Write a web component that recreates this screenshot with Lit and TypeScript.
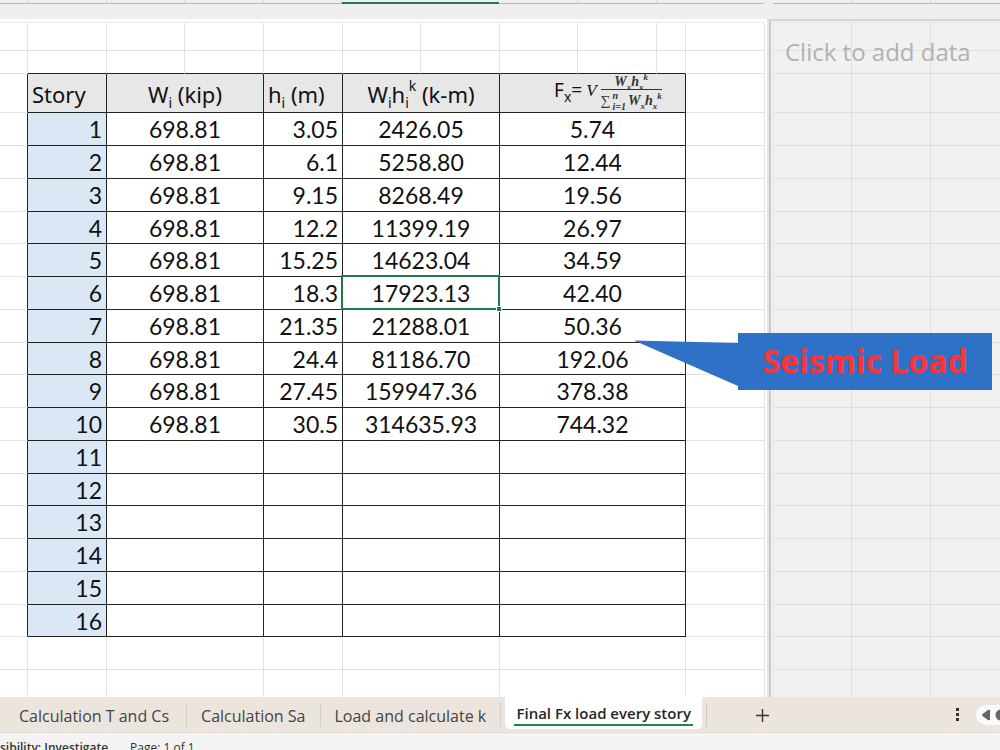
import { LitElement, html, css, nothing } from "lit";
import { customElement, state } from "lit/decorators.js";

type Row = [string, string, string, string];

const LOADS: Row[] = [
  ["698.81", "3.05", "2426.05", "5.74"],
  ["698.81", "6.1", "5258.80", "12.44"],
  ["698.81", "9.15", "8268.49", "19.56"],
  ["698.81", "12.2", "11399.19", "26.97"],
  ["698.81", "15.25", "14623.04", "34.59"],
  ["698.81", "18.3", "17923.13", "42.40"],
  ["698.81", "21.35", "21288.01", "50.36"],
  ["698.81", "24.4", "81186.70", "192.06"],
  ["698.81", "27.45", "159947.36", "378.38"],
  ["698.81", "30.5", "314635.93", "744.32"],
];
const STORIES = 16;
const EMPTY: Row = ["", "", "", ""];
const TABS = ["Calculation T and Cs", "Calculation Sa", "Load and calculate k", "Final Fx load every story"];

@customElement("sheet-table")
export class SheetTable extends LitElement {
  static styles = css`
    :host { display: block; }
    table { border-spacing: 0; table-layout: fixed; width: 765px; font: 23px/28px Lato, sans-serif; color: #111; }
    .c28 { width: 28px; } .c29 { width: 29px; } .c78 { width: 78px; } .c79 { width: 79px; }
    td, th { padding: 0; box-sizing: border-box; border: 0 solid #e2e2e2; border-width: 0 1px 1px 0; text-align: center; font-weight: 400; white-space: nowrap; }
    .margin { height: 28px; }
    .above { height: 23px; }
    .head { height: 39px; }
    .row { height: 33px; }
    .row:nth-child(4n) { height: 32px; }
    .tail { height: 33px; }
    .ink { border-color: #222; }
    .ink-right { border-right-color: #222; }
    .ink-bottom { border-bottom-color: #222; }
    .head .ink { background: #e7e7e7; font: 22px/28px "Noto Sans", sans-serif; padding-top: 2px; }
    .head .left { text-align: left; padding-left: 4px; }
    .head .formula { padding: 0 0 0 54px; text-align: left; }
    .row .story { background: #dae8f6; }
    .row .right { text-align: right; padding-right: 4px; }
    sub, sup { font-size: 14px; line-height: 0; }
    .power { vertical-align: 12px; }
    .selected { position: relative; }
    .cursor { position: absolute; inset: -2px -1px -1px -2px; border: 2px solid #1f7a48; pointer-events: none; }
    .grip { position: absolute; right: -4px; bottom: -4px; width: 4px; height: 4px; background: #1f7a48; border: 1px solid #fff; }
    .fx { display: flex; align-items: center; height: 38px; font: 19px/24px "Noto Sans", sans-serif; }
    .lead { padding-bottom: 6px; }
    .math { font: italic 17px/16px "Liberation Serif", serif; padding: 0 4px 5px 4px; }
    .frac { display: flex; flex-direction: column; align-items: center; }
    .num, .den { font: italic bold 14px/16px "Liberation Serif", serif; color: #333; display: flex; align-items: center; justify-content: center; }
    .num { border-bottom: 1px solid #333; width: 100%; height: 15px; }
    .den { height: 22px; gap: 2px; }
    .frac sub, .frac sup { font-size: 9px; }
    .limits { display: flex; flex-direction: column; font-size: 10px; line-height: 11px; }
    .sigma { font-style: normal; font-weight: 400; font-size: 14px; }
  `;

  private cells(story: number, r: Row) {
    const picked = story === 6;
    return html`<tr class="row">
      <td class="ink-right"></td>
      <th scope="row" class="ink story right">${story}</th>
      <td class="ink" colspan="2">${r[0]}</td>
      <td class="ink right">${r[1]}</td>
      <td class="ink ${picked ? "selected" : ""}" colspan="2">${r[2]}${picked
        ? html`<span class="cursor"><span class="grip"></span></span>`
        : nothing}</td>
      <td class="ink" colspan="3">${r[3]}</td>
      <td></td>
    </tr>`;
  }

  private spare(cls: string) {
    return html`<tr class=${cls}><td></td><td></td><td colspan="2"></td><td></td><td colspan="2"></td><td colspan="3"></td><td></td></tr>`;
  }

  render() {
    const w = html`<sub>x</sub>`;
    return html`<table>
      <colgroup>
        <col class="c28"><col class="c79"><col class="c78"><col class="c79"><col class="c79"><col class="c78">
        <col class="c79"><col class="c78"><col class="c79"><col class="c29"><col class="c79">
      </colgroup>
      <thead>
        <tr class="margin">${Array.from({ length: 11 }, () => html`<td></td>`)}</tr>
        <tr class="above">${Array.from({ length: 11 }, (_, i) => html`<td class=${i > 0 && i < 10 ? "ink-bottom" : ""}></td>`)}</tr>
        <tr class="head">
          <td class="ink-right"></td>
          <th scope="col" class="ink left">Story</th>
          <th scope="col" class="ink" colspan="2">W<sub>i</sub> (kip)</th>
          <th scope="col" class="ink left">h<sub>i</sub> (m)</th>
          <th scope="col" class="ink" colspan="2">W<sub>i</sub>h<sub>i</sub><sup class="power">k</sup> (k-m)</th>
          <th scope="col" class="ink formula" colspan="3">
            <div class="fx">
              <span class="lead">F<sub>x</sub>=</span><span class="math">V</span>
              <span class="frac">
                <span class="num"><span>W${w}h${w}<sup>k</sup></span></span>
                <span class="den"><span class="sigma">∑</span><span class="limits"><span>n</span><span>i=1</span></span><span>W${w}h${w}<sup>k</sup></span></span>
              </span>
            </div>
          </th>
          <td></td>
        </tr>
      </thead>
      <tbody>
        ${Array.from({ length: STORIES }, (_, i) => this.cells(i + 1, LOADS[i] ?? EMPTY))}
      </tbody>
      <tfoot>${this.spare("tail")}${this.spare("tail")}</tfoot>
    </table>`;
  }
}

@customElement("app-root")
export class AppRoot extends LitElement {
  @state() private active = 3;

  static styles = css`
    :host { display: flex; flex-direction: column; height: 100vh; overflow: hidden; position: relative; background: #efefef; font-family: "Open Sans", sans-serif; color: #333; }
    .columns { display: flex; flex: none; height: 4px; gap: 9px; margin-bottom: 15px; }
    .letters { display: flex; box-sizing: border-box; width: 764px; border-bottom: 1px solid #b9b9b9; }
    .letters.rest { flex: 1; width: auto; }
    .tick { flex: none; box-sizing: border-box; width: 79px; border-right: 1px solid #dadada; }
    .tick.first { width: 28px; }
    .tick.narrow { width: 78px; }
    .tick.wide { width: 157px; }
    .tick.on { height: 4px; border: 0; border-bottom: 2px solid #1f7a48; }
    .work { display: flex; flex: 1; min-height: 0; overflow: hidden; }
    .sheet { flex: none; width: 767px; background: #fff; padding-top: 3px; overflow: hidden; }
    .edge { border-top: 1px solid #ececec; width: 764px; }
    .split { flex: none; width: 2px; background: #e4e4e4; }
    .pane { flex: 1; position: relative; border-left: 2px solid #cacaca; border-top: 2px solid #d4d4d4; background: #f1f1f1; padding: 1px 0 0 2px; }
    .lines { border-left: 1px solid #e6e6e6; border-top: 1px solid #e6e6e6; height: 100%; background: repeating-linear-gradient(to right, transparent 0 77px, #dedede 77px 78px, transparent 78px 79px); }
    .line { box-sizing: border-box; border-bottom: 1px solid #dedede; height: 33px; }
    .line.margin { height: 28px; }
    .line.above { height: 23px; }
    .line.head { height: 39px; }
    .line.short { height: 32px; }
    .hint { position: absolute; left: 14px; top: 14px; font-size: 24px; line-height: 34px; color: #b1b1b1; white-space: nowrap; }
    .callout { position: absolute; left: 634px; top: 333px; display: flex; align-items: center; }
    .pointer { display: block; width: 104px; height: 57px; fill: #3071c8; }
    .label { width: 254px; height: 57px; background: #3071c8; color: #fb3437; font: bold 32px/56px "Noto Sans", sans-serif; text-align: center; white-space: nowrap; }
    .tabs { display: flex; flex: none; height: 37px; background: #ebe5de; border-bottom: 1px solid #fff; }
    .tab { border: 0; background: none; margin: 6px 0 7px; padding: 2px 14px 0; font: 16px/22px "Open Sans", sans-serif; color: #444; border-right: 1px solid #d6d0ca; white-space: nowrap; }
    .tab:first-child { padding: 2px 17px 0 19px; }
    .tab.on { margin: 0 4px 5px; padding: 2px 9px 0; background: #fff; border: 0; border-radius: 0 0 5px 5px; font-size: 15px; font-weight: 600; color: #262626; }
    .name { display: block; min-width: 179px; border-bottom: 2px solid #1f8750; }
    .add, .more { border: 0; background: none; padding: 0; margin-bottom: 3px; }
    .add { border-left: 1px solid #cfcac4; margin: 6px 0 7px; padding: 0 0 0 48px; }
    .more { margin-left: auto; margin-right: 15px; }
    .icon { display: block; }
    .scroll { width: 24px; height: 20px; margin-top: 8px; border-radius: 10px 0 0 10px; background: #fafafa; }
    .status { display: flex; flex: none; gap: 22px; height: 15px; overflow: hidden; background: #f3f3f3; font-size: 12px; line-height: 26px; color: #333; white-space: nowrap; }
    .access { font-weight: 600; }
  `;

  render() {
    return html`
      <div class="columns">
        <div class="letters">
          <span class="tick first"></span><span class="tick"></span><span class="tick narrow"></span><span class="tick"></span><span class="tick narrow"></span>
          <span class="tick wide on"></span><span class="tick"></span><span class="tick"></span>
        </div>
        <div class="letters rest"><span class="tick"></span><span class="tick"></span></div>
      </div>
      <div class="work">
        <div class="sheet"><div class="edge"></div><sheet-table></sheet-table></div>
        <div class="split"></div>
        <div class="pane">
          <div class="lines">
            <div class="line margin"></div><div class="line above"></div><div class="line head"></div>
            ${Array.from({ length: STORIES + 1 }, (_, i) => html`<div class="line ${i % 4 === 3 ? "short" : ""}"></div>`)}
          </div>
          <span class="hint">Click to add data</span>
        </div>
      </div>
      <div class="callout">
        <svg class="pointer" viewBox="0 0 104 57"><path d="M0 7.5 104 10V53Z" /></svg>
        <div class="label">Seismic Load</div>
      </div>
      <nav class="tabs">
        ${TABS.map((t, i) => html`<button class="tab ${i === this.active ? "on" : ""}" @click=${() => (this.active = i)}>${
          i === this.active ? html`<span class="name">${t}</span>` : t}</button>`)}
        <button class="add" aria-label="New sheet">
          <svg class="icon" width="15" height="15" viewBox="0 0 15 15"><path d="M7.5 1v13M1 7.5h13" stroke="#333" stroke-width="1.4" /></svg>
        </button>
        <button class="more" aria-label="More">
          <svg class="icon" width="7" height="14" viewBox="0 0 7 14" fill="#333"><path d="M2 1h3v3H2zM2 6h3v3H2zM2 11h3v3H2z" /></svg>
        </button>
        <div class="scroll">
          <svg class="icon" width="24" height="20" viewBox="0 0 24 20" fill="#666"><path d="M14 5v10q-1 .6-2 0L6.500 11q-1-1 0-2L12 5q1-.6 2 0Z" /><circle cx="25" cy="10" r="5.500" /></svg>
        </div>
      </nav>
      <footer class="status"><span class="access">sibility: Investigate</span><span>Page: 1 of 1</span></footer>
    `;
  }
}
